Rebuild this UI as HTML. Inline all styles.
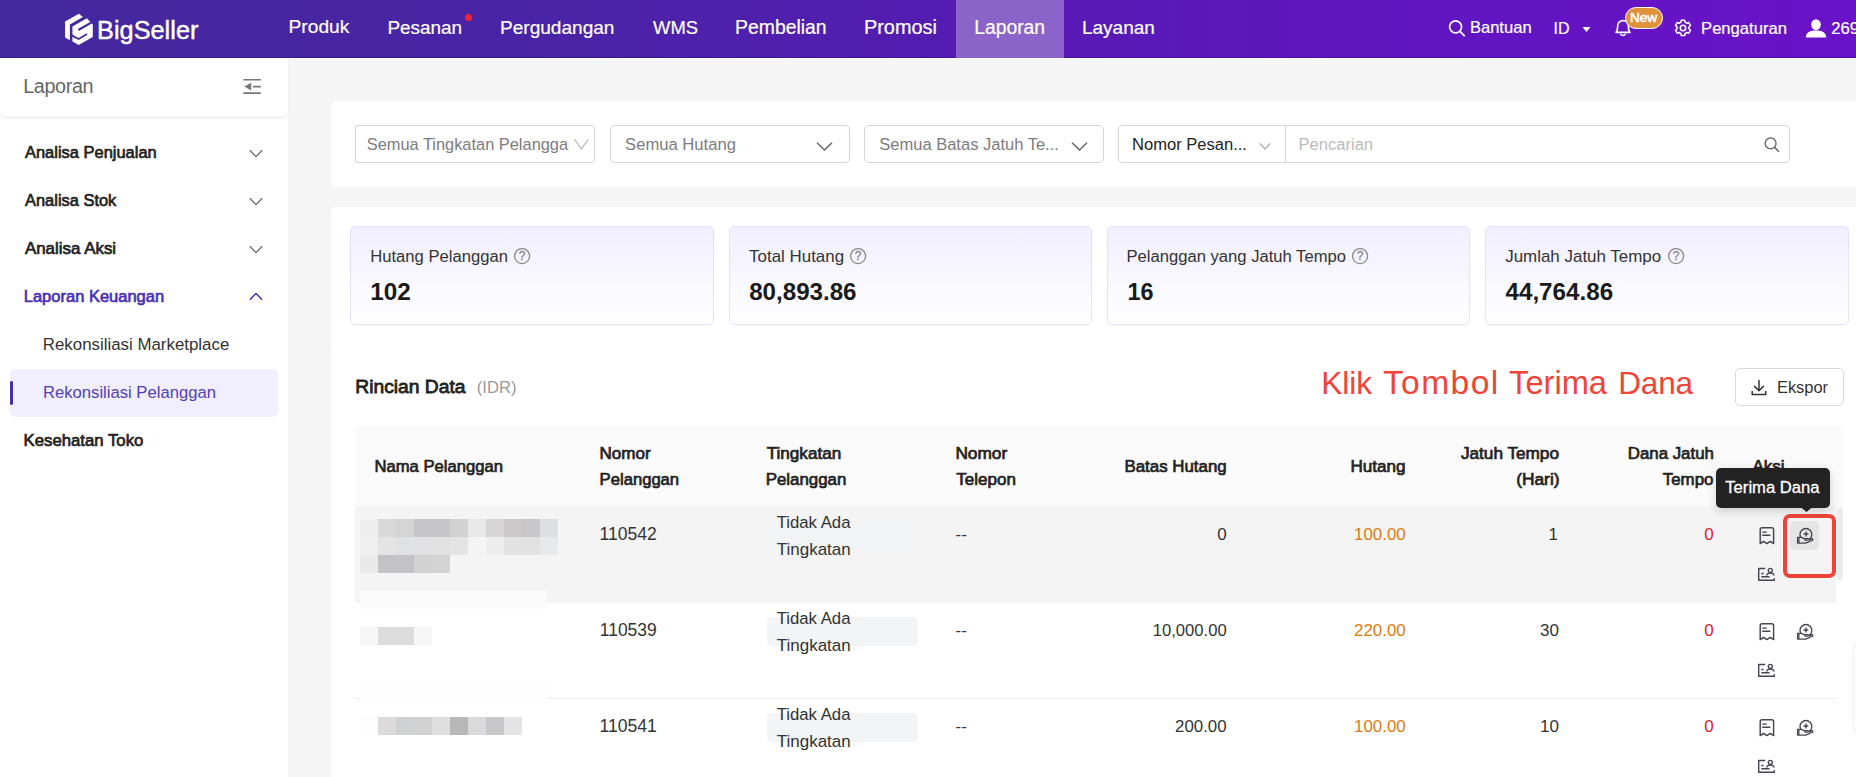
<!DOCTYPE html>
<html lang="id">
<head>
<meta charset="utf-8">
<title>BigSeller - Rekonsiliasi Pelanggan</title>
<style>
html,body{margin:0;padding:0;background:#f5f5f5;}
body{font-family:"Liberation Sans",Arial,sans-serif;overflow:hidden;}
#app{position:relative;width:1856px;height:777px;overflow:hidden;background:#f5f5f5;}
.grp{position:absolute;left:0;top:0;width:0;height:0;}
.b{position:absolute;box-sizing:border-box;}
.t{position:absolute;white-space:nowrap;line-height:1;font-family:"Liberation Sans",Arial,sans-serif;}
svg{position:absolute;overflow:visible;}
.sel{position:absolute;box-sizing:border-box;background:#fff;border:1px solid #d5d5d5;}
.stat{position:absolute;box-sizing:border-box;border:1px solid #e2e1fa;border-radius:5px;background:linear-gradient(180deg,#f1effe 0%,#f8f7ff 50%,#ffffff 100%);}
.tag{position:absolute;background:#f3f4f6;border-radius:5px;}
.mz{position:absolute;width:18px;height:18px;}
</style>
</head>
<body>
<div id="app">

<!-- ===== top header ===== -->
<header class="grp" style="z-index:3;">
  <div class="b" style="left:0;top:0;width:1856px;height:58px;background:linear-gradient(90deg,#43289d 0%,#4a23a6 30%,#561bb4 55%,#6115c1 78%,#6a12c8 100%);border-bottom:1px solid rgba(20,0,110,.32);"></div>
  <div class="b" style="left:956px;top:0;width:108px;height:58px;background:#8b63c9;"></div>
  <svg style="left:56px;top:8px" width="80" height="44" viewBox="0 0 1413 777">
    <polygon points="405,100 160,240 160,520 245,570 245,290 475,160" fill="#fff"/>
    <polygon points="545,180 290,325 290,590 400,655 650,510 650,290" fill="#fff"/>
    <path d="M395 388 L660 236" stroke="#43289d" stroke-width="37" fill="none"/>
    <path d="M270 478 L400 548 L548 460" stroke="#43289d" stroke-width="33" fill="none" stroke-linecap="butt"/>
  </svg>
  <div class="b" style="left:464.8px;top:14.2px;width:7px;height:7px;border-radius:50%;background:#f5222d;"></div>
  <!-- search -->
  <svg style="left:1447px;top:18px" width="20" height="20" viewBox="0 0 20 20"><circle cx="8.6" cy="8.8" r="6" fill="none" stroke="#fff" stroke-width="1.7"/><path d="M13 13.4 L17.2 17.6" stroke="#fff" stroke-width="1.8" stroke-linecap="round"/></svg>
  <!-- caret -->
  <svg style="left:1582px;top:26px" width="9" height="7" viewBox="0 0 9 7"><path d="M0.6 0.9 H8.4 L4.5 6 Z" fill="#fff"/></svg>
  <!-- bell -->
  <svg style="left:1614px;top:19px" width="18" height="18" viewBox="0 0 18 18"><path d="M2 13.4 C3.6 12 3.6 10.4 3.6 7.6 C3.6 4.2 5.8 1.6 9 1.6 C12.2 1.6 14.4 4.2 14.4 7.6 C14.4 10.4 14.4 12 16 13.4 Z" fill="none" stroke="#fff" stroke-width="1.6" stroke-linejoin="round"/><path d="M6.8 15.2 C7.2 17 10.8 17 11.2 15.2" fill="none" stroke="#fff" stroke-width="1.5" stroke-linecap="round"/></svg>
  <div class="b" style="left:1624.8px;top:6.9px;width:38.4px;height:21.8px;border-radius:11px;background:#e0923a;border:1px solid #fff;z-index:2;"></div>
  <!-- gear -->
  <svg style="left:1674px;top:19.4px" width="18" height="18" viewBox="0 0 18 18"><path d="M7.2 1.6 h3.6 l0.5 2.2 l1.7 1 l2.1-.7 l1.8 3.1 l-1.6 1.5 v2 l1.6 1.5 l-1.8 3.1 l-2.1-.7 l-1.7 1 l-.5 2.2 h-3.6 l-.5-2.2 l-1.7-1 l-2.1.7 l-1.8-3.1 l1.6-1.5 v-2 l-1.6-1.5 l1.8-3.1 l2.1.7 l1.7-1 Z" transform="translate(0.45 -0.35) scale(0.95)" fill="none" stroke="#fff" stroke-width="1.6" stroke-linejoin="round"/><circle cx="9" cy="9" r="2.7" fill="none" stroke="#fff" stroke-width="1.6"/></svg>
  <!-- user -->
  <svg style="left:1805px;top:18px" width="22" height="20" viewBox="0 0 22 20"><ellipse cx="11" cy="6.6" rx="4.8" ry="5.4" fill="#fff"/><path d="M0.8 19.6 C0.8 14.4 5.4 12.6 11 12.6 C16.6 12.6 21.2 14.4 21.2 19.6 Z" fill="#fff"/></svg>
  <span class="t" style="left:288.58px;top:17px;font-size:19.16px;color:#ffffff;-webkit-text-stroke:0.2px #ffffff;">Produk</span>
    <span class="t" style="left:387.4px;top:19px;font-size:18.93px;color:#ffffff;-webkit-text-stroke:0.2px #ffffff;">Pesanan</span>
    <span class="t" style="left:499.98px;top:18px;font-size:19.07px;color:#ffffff;-webkit-text-stroke:0.2px #ffffff;">Pergudangan</span>
    <span class="t" style="left:653.1px;top:19px;font-size:18.43px;color:#ffffff;-webkit-text-stroke:0.2px #ffffff;">WMS</span>
    <span class="t" style="left:735.12px;top:18px;font-size:19.35px;color:#ffffff;-webkit-text-stroke:0.2px #ffffff;">Pembelian</span>
    <span class="t" style="left:863.95px;top:18px;font-size:19.91px;color:#ffffff;-webkit-text-stroke:0.2px #ffffff;">Promosi</span>
    <span class="t" style="left:974.25px;top:18px;font-size:19.31px;color:#ffffff;-webkit-text-stroke:0.2px #ffffff;">Laporan</span>
    <span class="t" style="left:1081.97px;top:18px;font-size:18.99px;color:#ffffff;-webkit-text-stroke:0.2px #ffffff;">Layanan</span>
    <span class="t" style="left:1469.9px;top:20px;font-size:16.57px;color:#ffffff;-webkit-text-stroke:0.2px #ffffff;">Bantuan</span>
    <span class="t" style="left:1553.52px;top:21px;font-size:15.98px;color:#ffffff;-webkit-text-stroke:0.2px #ffffff;letter-spacing:-0.065px;">ID</span>
    <span class="t" style="left:1701.05px;top:21px;font-size:16.61px;color:#ffffff;-webkit-text-stroke:0.2px #ffffff;">Pengaturan</span>
    <span class="t" style="left:1831.25px;top:21px;font-size:16.61px;color:#ffffff;-webkit-text-stroke:0.2px #ffffff;">2699</span>
    <span class="t" style="left:97px;top:18px;font-size:25.23px;color:#ffffff;letter-spacing:0.061px;-webkit-text-stroke:0.45px #ffffff;">BigSeller</span>
    <span class="t" style="left:1629.98px;top:11px;font-size:13.6px;color:#ffffff;-webkit-text-stroke:0.56px #ffffff;z-index:3;">New</span>
</header>

<!-- ===== sidebar ===== -->
<aside class="grp" style="z-index:2;">
  <div class="b" style="left:0;top:58px;width:288px;height:719px;background:#fff;"></div>
  <div class="b" style="left:0;top:58px;width:288px;height:58.6px;background:#fff;border-radius:0 0 7px 7px;box-shadow:0 1px 2px rgba(0,0,0,.10);"></div>
  <svg style="left:242px;top:77px" width="20" height="18" viewBox="0 0 20 18"><path d="M1.4 2.7 H18.8 M10.8 9.6 H18.8 M1.4 16.1 H18.8" stroke="#777" stroke-width="1.6" fill="none"/><path d="M9.2 5.8 V13.4 L2.4 9.6 Z" fill="#777"/></svg>
  <div class="b" style="left:10.4px;top:369px;width:267.4px;height:48px;background:#f1eefd;border-radius:5px;"></div>
  <div class="b" style="left:10.4px;top:380.6px;width:2.8px;height:24.6px;background:#4330b0;border-radius:1.4px;"></div>
  <svg style="left:248px;top:148px" width="16" height="11" viewBox="0 0 16 11"><path d="M1.8 2.2 L8 8.6 L14.2 2.2" fill="none" stroke="#6a6a72" stroke-width="1.25"/></svg>
  <svg style="left:248px;top:196px" width="16" height="11" viewBox="0 0 16 11"><path d="M1.8 2.2 L8 8.6 L14.2 2.2" fill="none" stroke="#6a6a72" stroke-width="1.25"/></svg>
  <svg style="left:248px;top:244px" width="16" height="11" viewBox="0 0 16 11"><path d="M1.8 2.2 L8 8.6 L14.2 2.2" fill="none" stroke="#6a6a72" stroke-width="1.25"/></svg>
  <svg style="left:248px;top:291px" width="16" height="11" viewBox="0 0 16 11"><path d="M1.8 8.8 L8 2.4 L14.2 8.8" fill="none" stroke="#4330b0" stroke-width="1.4"/></svg>
  <span class="t" style="left:23.2px;top:77px;font-size:19.74px;color:#666;letter-spacing:-0.343px;">Laporan</span>
    <span class="t" style="left:24.97px;top:144px;font-size:16.47px;color:#222;-webkit-text-stroke:0.67px #222;">Analisa Penjualan</span>
    <span class="t" style="left:25.02px;top:192px;font-size:16.43px;color:#222;-webkit-text-stroke:0.67px #222;">Analisa Stok</span>
    <span class="t" style="left:24.95px;top:241px;font-size:16.91px;color:#222;-webkit-text-stroke:0.69px #222;">Analisa Aksi</span>
    <span class="t" style="left:23.75px;top:288px;font-size:16.51px;color:#4a2fb5;-webkit-text-stroke:0.68px #4a2fb5;">Laporan Keuangan</span>
    <span class="t" style="left:42.82px;top:337px;font-size:16.87px;color:#333;">Rekonsiliasi Marketplace</span>
    <span class="t" style="left:43.05px;top:385px;font-size:16.64px;color:#5140b8;">Rekonsiliasi Pelanggan</span>
    <span class="t" style="left:23.6px;top:433px;font-size:16.74px;color:#222;-webkit-text-stroke:0.69px #222;">Kesehatan Toko</span>
</aside>

<!-- ===== main content ===== -->
<main class="grp" style="z-index:1;">
  <div class="b" style="left:288px;top:58px;width:1568px;height:1px;background:#fdfdfd;"></div>
  <!-- filter card -->
  <section class="grp">
    <div class="b" style="left:331px;top:101px;width:1540px;height:85.6px;background:#fff;border-radius:5px;"></div>
    <div class="sel" style="left:355px;top:125px;width:240px;height:37.8px;border-radius:2.5px;"></div>
    <div class="sel" style="left:610.2px;top:125px;width:239.8px;height:37.8px;border-radius:5px;"></div>
    <div class="sel" style="left:864.2px;top:125px;width:239.8px;height:37.8px;border-radius:5px;"></div>
    <div class="sel" style="left:1118.2px;top:125px;width:671.6px;height:37.8px;border-radius:4px;"></div>
    <div class="b" style="left:1285px;top:125.5px;width:1px;height:37px;background:#d5d5d5;"></div>
    <svg style="left:573px;top:137px" width="17" height="14" viewBox="0 0 17 14"><path d="M1.6 2.4 L8.4 12 L15.2 2.4" fill="none" stroke="#b4b4b4" stroke-width="1.1"/></svg>
    <svg style="left:815px;top:140px" width="19" height="12" viewBox="0 0 19 12"><path d="M2 2.8 L9.5 10 L17 2.8" fill="none" stroke="#666" stroke-width="1.5"/></svg>
    <svg style="left:1069.5px;top:140px" width="19" height="12" viewBox="0 0 19 12"><path d="M2 2.8 L9.5 10 L17 2.8" fill="none" stroke="#666" stroke-width="1.5"/></svg>
    <svg style="left:1258px;top:141px" width="14" height="10" viewBox="0 0 14 10"><path d="M1.8 2.4 L7 7.8 L12.2 2.4" fill="none" stroke="#a0a0a0" stroke-width="1.2"/></svg>
    <svg style="left:1763px;top:136px" width="18" height="17" viewBox="0 0 18 17"><circle cx="7.6" cy="7.4" r="5.4" fill="none" stroke="#6b6b6b" stroke-width="1.4"/><path d="M11.6 11.4 L15.6 15.2" stroke="#6b6b6b" stroke-width="1.5" stroke-linecap="round"/></svg>
    <div class="b" style="left:367px;top:128px;width:201.6px;height:32px;overflow:hidden;"><span class="t" style="left:-0.3px;top:8px;font-size:16.4px;color:#7c7c7e;">Semua Tingkatan Pelanggan</span></div>
    <span class="t" style="left:625.05px;top:137px;font-size:16.64px;color:#7c7c7e;">Semua Hutang</span>
    <span class="t" style="left:879.25px;top:137px;font-size:16.53px;color:#7c7c7e;">Semua Batas Jatuh Te...</span>
    <span class="t" style="left:1132.03px;top:137px;font-size:16.56px;color:#222;">Nomor Pesan...</span>
    <span class="t" style="left:1298.43px;top:137px;font-size:16.58px;color:#bbb;">Pencarian</span>
  </section>

  <!-- stats + table card -->
  <section class="grp">
    <div class="b" style="left:331px;top:207px;width:1540px;height:137.5px;background:#fff;border-radius:5px 0 0 0;"></div>
    <div class="b" style="left:331px;top:344.5px;width:1540px;height:460px;background:#fff;border-radius:4px 0 0 0;"></div>
    <div class="stat" style="left:350px;top:226px;width:364px;height:98.6px;"></div>
    <div class="stat" style="left:729.2px;top:226px;width:362.6px;height:98.6px;"></div>
    <div class="stat" style="left:1107.4px;top:226px;width:362.6px;height:98.6px;"></div>
    <div class="stat" style="left:1485.2px;top:226px;width:363.4px;height:98.6px;"></div>
    <svg style="left:513.3px;top:246.8px" width="18" height="18" viewBox="0 0 18 18"><circle cx="9.1" cy="9.1" r="7.5" fill="none" stroke="#8a8a8a" stroke-width="1.3"/><text x="9.1" y="13.3" text-anchor="middle" font-family="Liberation Sans, Arial, sans-serif" font-size="12" stroke="#8a8a8a" stroke-width="0.3" fill="#8a8a8a">?</text></svg>
    <svg style="left:849.1px;top:246.8px" width="18" height="18" viewBox="0 0 18 18"><circle cx="9.1" cy="9.1" r="7.5" fill="none" stroke="#8a8a8a" stroke-width="1.3"/><text x="9.1" y="13.3" text-anchor="middle" font-family="Liberation Sans, Arial, sans-serif" font-size="12" stroke="#8a8a8a" stroke-width="0.3" fill="#8a8a8a">?</text></svg>
    <svg style="left:1351.4px;top:246.8px" width="18" height="18" viewBox="0 0 18 18"><circle cx="9.1" cy="9.1" r="7.5" fill="none" stroke="#8a8a8a" stroke-width="1.3"/><text x="9.1" y="13.3" text-anchor="middle" font-family="Liberation Sans, Arial, sans-serif" font-size="12" stroke="#8a8a8a" stroke-width="0.3" fill="#8a8a8a">?</text></svg>
    <svg style="left:1666.5px;top:246.8px" width="18" height="18" viewBox="0 0 18 18"><circle cx="9.1" cy="9.1" r="7.5" fill="none" stroke="#8a8a8a" stroke-width="1.3"/><text x="9.1" y="13.3" text-anchor="middle" font-family="Liberation Sans, Arial, sans-serif" font-size="12" stroke="#8a8a8a" stroke-width="0.3" fill="#8a8a8a">?</text></svg>
    <span class="t" style="left:370.28px;top:249px;font-size:16.63px;color:#333;">Hutang Pelanggan</span>
    <span class="t" style="left:370.25px;top:280px;font-size:24.26px;color:#1a1a1a;font-weight:700;">102</span>
    <span class="t" style="left:749.12px;top:249px;font-size:16.92px;color:#333;">Total Hutang</span>
    <span class="t" style="left:749.18px;top:280px;font-size:24.13px;color:#1a1a1a;font-weight:700;">80,893.86</span>
    <span class="t" style="left:1126.5px;top:249px;font-size:16.61px;color:#333;">Pelanggan yang Jatuh Tempo</span>
    <span class="t" style="left:1127.53px;top:281px;font-size:23.36px;color:#1a1a1a;font-weight:700;">16</span>
    <span class="t" style="left:1505.2px;top:249px;font-size:16.94px;color:#333;">Jumlah Jatuh Tempo</span>
    <span class="t" style="left:1505.5px;top:280px;font-size:24.19px;color:#1a1a1a;font-weight:700;">44,764.86</span>
  </section>

  <section class="grp">
    <!-- export button -->
    <div class="b" style="left:1735.2px;top:368px;width:108.6px;height:37.6px;border:1px solid #d9d9d9;border-radius:5px;background:#fff;"></div>
    <svg style="left:1750px;top:378px" width="18" height="19" viewBox="0 0 18 19"><path d="M9 2.4 V12.6 M4.6 8.4 L9 12.8 L13.4 8.4 M2.2 13.4 V16.6 H15.8 V13.4" fill="none" stroke="#333" stroke-width="1.5" stroke-linecap="round" stroke-linejoin="round"/></svg>
    <!-- table header -->
    <div class="b" style="left:355px;top:426px;width:1488.4px;height:80px;background:#fafafa;border-radius:5px 5px 0 0;"></div>
    <!-- row 1 hovered -->
    <div class="b" style="left:355px;top:506px;width:1481.2px;height:97px;background:#f4f4f4;"></div>
    <div class="b" style="left:355px;top:698px;width:1481.2px;height:1px;background:#ececec;"></div>
    <div class="b" style="left:1837.4px;top:507px;width:6px;height:72.8px;background:#ececec;border-radius:3px;"></div>
    <div class="mz" style="left:360px;top:519px;background:#eeeeee;"></div>
    <div class="mz" style="left:378px;top:519px;background:#d9d9d9;"></div>
    <div class="mz" style="left:396px;top:519px;background:#d5d5d5;"></div>
    <div class="mz" style="left:414px;top:519px;background:#c6c6c8;"></div>
    <div class="mz" style="left:432px;top:519px;background:#c6c6c8;"></div>
    <div class="mz" style="left:450px;top:519px;background:#d2d2d2;"></div>
    <div class="mz" style="left:468px;top:519px;background:#e9e9e9;"></div>
    <div class="mz" style="left:486px;top:519px;background:#d6d6d6;"></div>
    <div class="mz" style="left:504px;top:519px;background:#cbc9ca;"></div>
    <div class="mz" style="left:522px;top:519px;background:#c8c8ca;"></div>
    <div class="mz" style="left:540px;top:519px;background:#dedfe1;"></div>
    <div class="mz" style="left:360px;top:537px;background:#efefef;"></div>
    <div class="mz" style="left:378px;top:537px;background:#e4e4e4;"></div>
    <div class="mz" style="left:396px;top:537px;background:#e0e1e3;"></div>
    <div class="mz" style="left:414px;top:537px;background:#e1e1e3;"></div>
    <div class="mz" style="left:432px;top:537px;background:#e2e2e2;"></div>
    <div class="mz" style="left:450px;top:537px;background:#e4e4e4;"></div>
    <div class="mz" style="left:486px;top:537px;background:#ededed;"></div>
    <div class="mz" style="left:504px;top:537px;background:#e2e2e2;"></div>
    <div class="mz" style="left:522px;top:537px;background:#e2e2e2;"></div>
    <div class="mz" style="left:540px;top:537px;background:#e8e9eb;"></div>
    <div class="mz" style="left:360px;top:555px;background:#e9e9e9;"></div>
    <div class="mz" style="left:378px;top:555px;background:#c4c4c6;"></div>
    <div class="mz" style="left:396px;top:555px;background:#c4c4c6;"></div>
    <div class="mz" style="left:414px;top:555px;background:#d2d2d2;"></div>
    <div class="mz" style="left:432px;top:555px;background:#d4d4d4;"></div>
    <div class="mz" style="left:360px;top:591px;background:#fbfbfb;width:187px;height:18px;"></div>
    <div class="mz" style="left:360px;top:627px;background:#f7f7f7;"></div>
    <div class="mz" style="left:378px;top:627px;background:#dcdcdc;"></div>
    <div class="mz" style="left:396px;top:627px;background:#dcdcdc;"></div>
    <div class="mz" style="left:414px;top:627px;background:#f7f7f7;"></div>
    <div class="mz" style="left:360px;top:681px;background:#fefefe;width:187px;height:18px;"></div>
    <div class="mz" style="left:360px;top:717px;background:#fdfdfd;"></div>
    <div class="mz" style="left:378px;top:717px;background:#dcdadb;"></div>
    <div class="mz" style="left:396px;top:717px;background:#d0d1d3;"></div>
    <div class="mz" style="left:414px;top:717px;background:#d2d2d2;"></div>
    <div class="mz" style="left:432px;top:717px;background:#dedede;"></div>
    <div class="mz" style="left:450px;top:717px;background:#b8b8b8;"></div>
    <div class="mz" style="left:468px;top:717px;background:#dadada;"></div>
    <div class="mz" style="left:486px;top:717px;background:#c8c8ca;"></div>
    <div class="mz" style="left:504px;top:717px;background:#e4e4e4;"></div>
    <div class="tag" style="left:767.2px;top:521px;width:150.8px;height:28.6px;background:#f2f3f5;"></div>
    <div class="tag" style="left:767.2px;top:617.2px;width:150.8px;height:28.6px;"></div>
    <div class="tag" style="left:767.2px;top:713px;width:150.8px;height:28.8px;"></div>
    <div class="b" style="left:1790px;top:521px;width:29px;height:29px;background:#e5e5e5;border-radius:5px;"></div>
    <svg style="left:1757.5px;top:525.5px" width="18" height="20" viewBox="0 0 18 20"><path d="M2.2 17.6 V3.5 Q2.2 1.7 4 1.7 H13.8 Q15.6 1.7 15.6 3.5 V17.6 L12.25 15.4 L8.9 17.6 L5.55 15.4 Z" fill="none" stroke="#454550" stroke-width="1.45" stroke-linejoin="round"/><path d="M4.2 6.1 H8.8 M4.2 9.2 H12.4" stroke="#454550" stroke-width="1.45" fill="none"/></svg>
    <svg style="left:1796px;top:526.5px" width="20" height="20" viewBox="0 0 20 20"><circle cx="9.9" cy="7.4" r="5.9" fill="none" stroke="#454550" stroke-width="1.35"/><path d="M9.95 4.6 V9.4 M7.55 7 H12.35" stroke="#454550" stroke-width="1.35" fill="none"/><path d="M1.6 10.3 H5.6 L8.1 11.7 H11.8 L12.6 12.9 L16.2 11.5 L16.9 13 L9.6 16.1 H1.6 Z" fill="#e5e5e5" stroke="#454550" stroke-width="1.35" stroke-linejoin="round"/><path d="M2.9 10.3 V16.1 M8.4 12.9 L11.6 13.3" stroke="#454550" stroke-width="1.3" fill="none"/></svg>
    <svg style="left:1757px;top:566px" width="19" height="17" viewBox="0 0 19 17"><path d="M8.2 2.5 H1.7 V14.3 H17.3 V12.2" fill="none" stroke="#454550" stroke-width="1.45" stroke-linejoin="round"/><path d="M4.3 7.5 H6.6 M4.3 10.7 H12.5" stroke="#454550" stroke-width="1.45" fill="none"/><circle cx="13.3" cy="4.4" r="2" fill="none" stroke="#454550" stroke-width="1.35"/><path d="M9.7 9.5 C10 6.4 16.8 6.4 17.1 9.5" fill="none" stroke="#454550" stroke-width="1.35"/></svg>
    <svg style="left:1757.5px;top:621.5px" width="18" height="20" viewBox="0 0 18 20"><path d="M2.2 17.6 V3.5 Q2.2 1.7 4 1.7 H13.8 Q15.6 1.7 15.6 3.5 V17.6 L12.25 15.4 L8.9 17.6 L5.55 15.4 Z" fill="none" stroke="#454550" stroke-width="1.45" stroke-linejoin="round"/><path d="M4.2 6.1 H8.8 M4.2 9.2 H12.4" stroke="#454550" stroke-width="1.45" fill="none"/></svg>
    <svg style="left:1796px;top:622.5px" width="20" height="20" viewBox="0 0 20 20"><circle cx="9.9" cy="7.4" r="5.9" fill="none" stroke="#454550" stroke-width="1.35"/><path d="M9.95 4.6 V9.4 M7.55 7 H12.35" stroke="#454550" stroke-width="1.35" fill="none"/><path d="M1.6 10.3 H5.6 L8.1 11.7 H11.8 L12.6 12.9 L16.2 11.5 L16.9 13 L9.6 16.1 H1.6 Z" fill="#fff" stroke="#454550" stroke-width="1.35" stroke-linejoin="round"/><path d="M2.9 10.3 V16.1 M8.4 12.9 L11.6 13.3" stroke="#454550" stroke-width="1.3" fill="none"/></svg>
    <svg style="left:1757px;top:662px" width="19" height="17" viewBox="0 0 19 17"><path d="M8.2 2.5 H1.7 V14.3 H17.3 V12.2" fill="none" stroke="#454550" stroke-width="1.45" stroke-linejoin="round"/><path d="M4.3 7.5 H6.6 M4.3 10.7 H12.5" stroke="#454550" stroke-width="1.45" fill="none"/><circle cx="13.3" cy="4.4" r="2" fill="none" stroke="#454550" stroke-width="1.35"/><path d="M9.7 9.5 C10 6.4 16.8 6.4 17.1 9.5" fill="none" stroke="#454550" stroke-width="1.35"/></svg>
    <svg style="left:1757.5px;top:717.5px" width="18" height="20" viewBox="0 0 18 20"><path d="M2.2 17.6 V3.5 Q2.2 1.7 4 1.7 H13.8 Q15.6 1.7 15.6 3.5 V17.6 L12.25 15.4 L8.9 17.6 L5.55 15.4 Z" fill="none" stroke="#454550" stroke-width="1.45" stroke-linejoin="round"/><path d="M4.2 6.1 H8.8 M4.2 9.2 H12.4" stroke="#454550" stroke-width="1.45" fill="none"/></svg>
    <svg style="left:1796px;top:718.5px" width="20" height="20" viewBox="0 0 20 20"><circle cx="9.9" cy="7.4" r="5.9" fill="none" stroke="#454550" stroke-width="1.35"/><path d="M9.95 4.6 V9.4 M7.55 7 H12.35" stroke="#454550" stroke-width="1.35" fill="none"/><path d="M1.6 10.3 H5.6 L8.1 11.7 H11.8 L12.6 12.9 L16.2 11.5 L16.9 13 L9.6 16.1 H1.6 Z" fill="#fff" stroke="#454550" stroke-width="1.35" stroke-linejoin="round"/><path d="M2.9 10.3 V16.1 M8.4 12.9 L11.6 13.3" stroke="#454550" stroke-width="1.3" fill="none"/></svg>
    <svg style="left:1757px;top:758px" width="19" height="17" viewBox="0 0 19 17"><path d="M8.2 2.5 H1.7 V14.3 H17.3 V12.2" fill="none" stroke="#454550" stroke-width="1.45" stroke-linejoin="round"/><path d="M4.3 7.5 H6.6 M4.3 10.7 H12.5" stroke="#454550" stroke-width="1.45" fill="none"/><circle cx="13.3" cy="4.4" r="2" fill="none" stroke="#454550" stroke-width="1.35"/><path d="M9.7 9.5 C10 6.4 16.8 6.4 17.1 9.5" fill="none" stroke="#454550" stroke-width="1.35"/></svg>
    <div class="b" style="left:1854.5px;top:640px;width:20px;height:96px;border-radius:10px;background:#fff;box-shadow:0 0 8px rgba(0,0,0,.09);"></div>
    <!-- tooltip -->
    <div class="b" style="left:1716px;top:468px;width:114px;height:39.6px;background:#232323;border-radius:5px;z-index:4;box-shadow:0 3px 10px rgba(0,0,0,.17);"></div>
    <svg style="left:1799.5px;top:507.2px;z-index:4" width="13" height="6" viewBox="0 0 13 6"><path d="M0.5 0 L6.5 5 L12.5 0 Z" fill="#232323"/></svg>
    <span class="t" style="left:355.28px;top:377px;font-size:19.26px;color:#222;-webkit-text-stroke:0.79px #222;">Rincian Data</span>
    <span class="t" style="left:476.85px;top:380px;font-size:16.6px;color:#999;">(IDR)</span>
    <span class="t" style="left:1321.15px;top:368px;font-size:31.65px;color:#f04438;">Klik</span>
    <span class="t" style="left:1382.93px;top:366px;font-size:33.64px;color:#f04438;letter-spacing:1.378px;">Tombol</span>
    <span class="t" style="left:1509.1px;top:367px;font-size:32.62px;color:#f04438;">Terima</span>
    <span class="t" style="left:1618.15px;top:368px;font-size:31.52px;color:#f04438;letter-spacing:-0.117px;">Dana</span>
    <span class="t" style="left:1776.95px;top:379px;font-size:16.43px;color:#333;">Ekspor</span>
    <span class="t" style="left:374.55px;top:459px;font-size:16.63px;color:#222;-webkit-text-stroke:0.68px #222;">Nama Pelanggan</span>
    <span class="t" style="left:599.45px;top:445px;font-size:17.06px;color:#222;-webkit-text-stroke:0.7px #222;">Nomor</span>
    <span class="t" style="left:599.62px;top:472px;font-size:16.64px;color:#222;-webkit-text-stroke:0.68px #222;">Pelanggan</span>
    <span class="t" style="left:766.7px;top:445px;font-size:17.11px;color:#222;-webkit-text-stroke:0.7px #222;">Tingkatan</span>
    <span class="t" style="left:765.7px;top:472px;font-size:16.86px;color:#222;-webkit-text-stroke:0.69px #222;">Pelanggan</span>
    <span class="t" style="left:955.4px;top:445px;font-size:17.27px;color:#222;-webkit-text-stroke:0.71px #222;">Nomor</span>
    <span class="t" style="left:956.35px;top:471px;font-size:16.99px;color:#222;-webkit-text-stroke:0.7px #222;">Telepon</span>
    <span class="t" style="left:1124.5px;top:459px;font-size:16.88px;color:#222;-webkit-text-stroke:0.69px #222;">Batas Hutang</span>
    <span class="t" style="left:1350.4px;top:458px;font-size:17.1px;color:#222;-webkit-text-stroke:0.7px #222;">Hutang</span>
    <span class="t" style="left:1460.9px;top:445px;font-size:17.19px;color:#222;-webkit-text-stroke:0.7px #222;">Jatuh Tempo</span>
    <span class="t" style="left:1516.15px;top:471px;font-size:17.36px;color:#222;-webkit-text-stroke:0.71px #222;">(Hari)</span>
    <span class="t" style="left:1627.8px;top:446px;font-size:16.84px;color:#222;-webkit-text-stroke:0.69px #222;">Dana Jatuh</span>
    <span class="t" style="left:1662.8px;top:472px;font-size:16.86px;color:#222;-webkit-text-stroke:0.69px #222;">Tempo</span>
    <span class="t" style="left:1752.5px;top:458px;font-size:17.01px;color:#222;-webkit-text-stroke:0.7px #222;z-index:6;">Aksi</span>
    <span class="t" style="left:1725.32px;top:480px;font-size:16.64px;color:#fff;z-index:5;-webkit-text-stroke:0.3px #fff;">Terima Dana</span>
    <span class="t" style="left:599.62px;top:526px;font-size:17.56px;color:#333;">110542</span>
    <span class="t" style="left:776.72px;top:515px;font-size:16.73px;color:#333;">Tidak Ada</span>
    <span class="t" style="left:776.7px;top:541px;font-size:17px;color:#333;">Tingkatan</span>
    <span class="t" style="left:955.62px;top:526px;font-size:17px;color:#333;">--</span>
    <span class="t" style="left:1217.25px;top:526px;font-size:17px;color:#333;">0</span>
    <span class="t" style="left:1354px;top:527px;font-size:16.93px;color:#e07a10;">100.00</span>
    <span class="t" style="left:1548.5px;top:526px;font-size:17px;color:#333;">1</span>
    <span class="t" style="left:1704.25px;top:526px;font-size:17px;color:#e0202a;">0</span>
    <span class="t" style="left:599.75px;top:622px;font-size:17.48px;color:#333;">110539</span>
    <span class="t" style="left:776.72px;top:611px;font-size:16.73px;color:#333;">Tidak Ada</span>
    <span class="t" style="left:776.7px;top:637px;font-size:17px;color:#333;">Tingkatan</span>
    <span class="t" style="left:955.62px;top:622px;font-size:17px;color:#333;">--</span>
    <span class="t" style="left:1152.75px;top:623px;font-size:16.62px;color:#333;">10,000.00</span>
    <span class="t" style="left:1354px;top:623px;font-size:16.93px;color:#e07a10;">220.00</span>
    <span class="t" style="left:1539.95px;top:622px;font-size:17px;color:#333;">30</span>
    <span class="t" style="left:1704.25px;top:622px;font-size:17px;color:#e0202a;">0</span>
    <span class="t" style="left:599.62px;top:718px;font-size:17.56px;color:#333;">110541</span>
    <span class="t" style="left:776.72px;top:707px;font-size:16.73px;color:#333;">Tidak Ada</span>
    <span class="t" style="left:776.7px;top:733px;font-size:17px;color:#333;">Tingkatan</span>
    <span class="t" style="left:955.62px;top:718px;font-size:17px;color:#333;">--</span>
    <span class="t" style="left:1175px;top:719px;font-size:16.87px;color:#333;">200.00</span>
    <span class="t" style="left:1354px;top:719px;font-size:16.93px;color:#e07a10;">100.00</span>
    <span class="t" style="left:1539.95px;top:718px;font-size:17px;color:#333;">10</span>
    <span class="t" style="left:1704.25px;top:718px;font-size:17px;color:#e0202a;">0</span>
    <!-- red highlight box -->
    <div class="b" style="left:1783.2px;top:514.2px;width:52.8px;height:63.6px;border:4.2px solid #ee4338;border-radius:7px;z-index:3;"></div>
  </section>
</main>



</div>
</body>
</html>
